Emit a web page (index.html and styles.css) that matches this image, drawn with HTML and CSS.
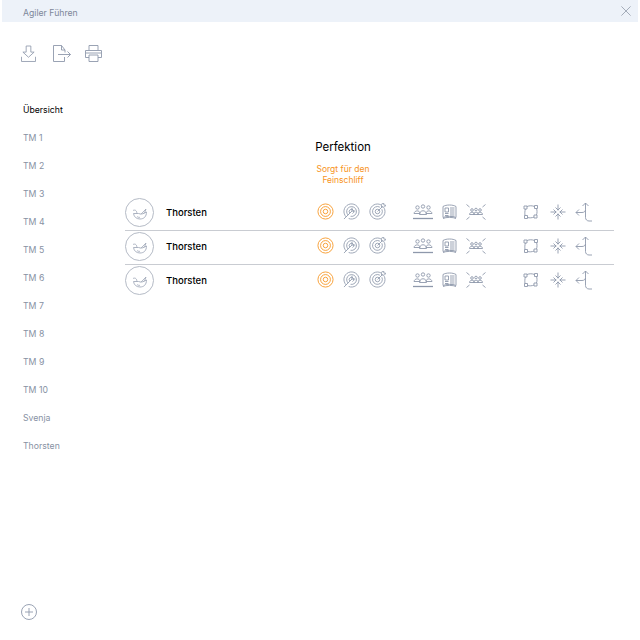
FILE: index.html
```html
<!DOCTYPE html>
<html lang="de">
<head>
    <meta charset="UTF-8">
    <meta name="viewport" content="width=device-width, initial-scale=1.0">
    <title>Agiler Führen</title>
    <link rel="stylesheet" href="styles.css">
</head>
<body>
    <svg class="defs" width="0" height="0">
        <symbol id="i-target" viewBox="0 0 18 18">
            <circle cx="9" cy="9" r="8"/><circle cx="9" cy="9" r="5.2"/><circle cx="9" cy="9" r="2.4"/>
        </symbol>
        <symbol id="i-aim" viewBox="0 0 18 18">
            <path d="M3.500 14.800A8 8 0 1 1 6 16.400"/><path d="M5.500 12.800A5.200 5.200 0 1 1 8 14.100"/><path d="M7.200 10.600A2.400 2.400 0 1 1 10 11.200"/>
            <path d="M1 17 9.500 8.500M9.500 8.500V5M9.500 8.500H13"/>
        </symbol>
        <symbol id="i-hit" viewBox="0 0 18 18">
            <path d="M12.500 1.900A8 8 0 1 0 16.100 5.500"/><path d="M11.500 4.400A5.200 5.200 0 1 0 13.600 6.600"/><circle cx="9" cy="9" r="2.400"/>
            <path d="M9 9 14.500 3.500M13 1.500l.3 2.700 2.700.3L18 2.500l-2.200-.3L15.500 0z"/>
        </symbol>
        <symbol id="i-group" viewBox="0 0 20 16">
            <circle cx="4.500" cy="3.500" r="1.700"/><circle cx="10" cy="2.500" r="1.700"/><circle cx="15.500" cy="3.500" r="1.700"/>
            <path d="M1 9.500c.5-3.500 6-3.500 6 0zM6.500 10.500c0-5 7-5 7 0zM13 9.500c0-3.500 5.500-3.500 6 0z"/>
            <path class="heavy" d="M0 14.500h20"/>
        </symbol>
        <symbol id="i-book" viewBox="0 0 15 16">
            <path d="M1 2.500c3-2 10-2 13 0v11c-3-1.500-10-1.500-13 0z"/>
            <path d="M3 4h3.500v4H3zM3 9.500h3.500M3 11.500h3.500M8 4h4.500M8 6h4.500M8 8h4.500M8 10h4.500M8 12h4.500M1 14.500c3-1.500 10-1.500 13 0"/>
        </symbol>
        <symbol id="i-burst" viewBox="0 0 20 16">
            <circle cx="6" cy="6" r="1.300"/><circle cx="10" cy="5.500" r="1.300"/><circle cx="14" cy="6" r="1.300"/>
            <path d="M3.500 10.500c0-3 5-3 5 0zM7.500 10.500c0-3 5-3 5 0zM11.500 10.500c0-3 5-3 5 0z"/>
            <path d="M.5 .5l3 2.500M19.500 .5l-3 2.500M.5 15.500l3-2.500M19.500 15.500l-3-2.500"/>
        </symbol>
        <symbol id="i-expand" viewBox="0 0 16 16">
            <path d="M1 2h3v3H1zM11.500 1.500h3v3h-3zM1.500 11.500h3v3h-3zM11 11h3v3h-3z"/>
            <path d="M4 2.500c2.500-1 5-1 7.500 0M2.500 5c-.8 2.200-.8 4.200-.5 6.500M13.500 4.500c.7 2 .7 4.200 0 6.500M4.500 13.500c2 .5 4.500.5 6.500-.5"/>
        </symbol>
        <symbol id="i-merge" viewBox="0 0 16 16">
            <path d="M8 .5v6M8 9.500v6M.5 8h6M9.500 8h6"/>
            <path d="M5.500 3.500 8 6l2.500-2.500M5.500 12.500 8 10l2.500 2.500M3.500 5.500 6 8l-2.500 2.500M12.500 5.500 10 8l2.500 2.500"/>
        </symbol>
        <symbol id="i-split" viewBox="0 0 17 20">
            <path d="M1 10.500h6c2 0 3.500-1 3.500-3V1M7.500 4l3-3 3 3M4 7.500l-3 3 3 3M10.500 7.500v8c0 2 1.500 3.500 3.500 3.500h3"/>
        </symbol>
        <symbol id="i-bird" viewBox="0 0 16 12">
            <path d="M1.500 5.500h5c2.500 1 5 .5 8-1.500C14.500 8.500 12 11 8 11 4.500 11 2 9 1.500 5.500z"/>
            <path d="M1 2.500C3 1.500 5 2.500 4.800 5.500M9 6.200 14 1l-1.500 4M5 8.500c1 .8 2 1 3 .8"/>
        </symbol>
    </svg>

    <header class="titlebar">
        <span class="titlebar-name">Agiler Führen</span>
        <svg class="close-icon" viewBox="0 0 12 12"><path d="M.5 .5l11 11M11.500 .5l-11 11"/></svg>
    </header>

    <div class="toolbar">
        <svg class="tool tool-save" viewBox="0 0 16 18"><path d="M5.500 1h5v6.500H14L8 13 2 7.500h3.500zM.5 12.500v5h15v-5"/></svg>
        <svg class="tool tool-export" viewBox="0 0 18 17"><path d="M8.500 .5H.5v16h11v-4.500M8.500 .5 12 5v2.500M8.500 .5V5H12M5 9.500h12.500M14.500 6.500l3 3-3 3"/></svg>
        <svg class="tool tool-print" viewBox="0 0 17 17"><path d="M4 5V.5h9V5M4 12.500H.5v-7h16v7H13M4 10h9v6.500H4zM1 8h15"/></svg>
    </div>

    <div class="layout">
        <nav class="sidebar">
            <a class="nav-item active">Übersicht</a>
            <a class="nav-item">TM 1</a>
            <a class="nav-item">TM 2</a>
            <a class="nav-item">TM 3</a>
            <a class="nav-item">TM 4</a>
            <a class="nav-item">TM 5</a>
            <a class="nav-item">TM 6</a>
            <a class="nav-item">TM 7</a>
            <a class="nav-item">TM 8</a>
            <a class="nav-item">TM 9</a>
            <a class="nav-item">TM 10</a>
            <a class="nav-item">Svenja</a>
            <a class="nav-item">Thorsten</a>
        </nav>

        <main class="content">
            <div class="heading">
                <h1>Perfektion</h1>
                <p>Sorgt für den<br>Feinschliff</p>
            </div>

            <div class="row">
                <span class="avatar"><svg><use href="#i-bird"/></svg></span>
                <span class="name">Thorsten</span>
                <div class="icons targets">
                    <svg class="on"><use href="#i-target"/></svg><svg><use href="#i-aim"/></svg><svg><use href="#i-hit"/></svg>
                </div>
                <div class="icons teams">
                    <svg class="wide"><use href="#i-group"/></svg><svg class="book"><use href="#i-book"/></svg><svg class="wide"><use href="#i-burst"/></svg>
                </div>
                <div class="icons moves">
                    <svg class="move"><use href="#i-expand"/></svg><svg class="move"><use href="#i-merge"/></svg><svg class="move tall"><use href="#i-split"/></svg>
                </div>
            </div>
            <div class="row">
                <span class="avatar"><svg><use href="#i-bird"/></svg></span>
                <span class="name">Thorsten</span>
                <div class="icons targets">
                    <svg class="on"><use href="#i-target"/></svg><svg><use href="#i-aim"/></svg><svg><use href="#i-hit"/></svg>
                </div>
                <div class="icons teams">
                    <svg class="wide"><use href="#i-group"/></svg><svg class="book"><use href="#i-book"/></svg><svg class="wide"><use href="#i-burst"/></svg>
                </div>
                <div class="icons moves">
                    <svg class="move"><use href="#i-expand"/></svg><svg class="move"><use href="#i-merge"/></svg><svg class="move tall"><use href="#i-split"/></svg>
                </div>
            </div>
            <div class="row">
                <span class="avatar"><svg><use href="#i-bird"/></svg></span>
                <span class="name">Thorsten</span>
                <div class="icons targets">
                    <svg class="on"><use href="#i-target"/></svg><svg><use href="#i-aim"/></svg><svg><use href="#i-hit"/></svg>
                </div>
                <div class="icons teams">
                    <svg class="wide"><use href="#i-group"/></svg><svg class="book"><use href="#i-book"/></svg><svg class="wide"><use href="#i-burst"/></svg>
                </div>
                <div class="icons moves">
                    <svg class="move"><use href="#i-expand"/></svg><svg class="move"><use href="#i-merge"/></svg><svg class="move tall"><use href="#i-split"/></svg>
                </div>
            </div>
        </main>
    </div>

    <svg class="add-icon" viewBox="0 0 18 18"><circle cx="9" cy="9" r="7.500"/><path d="M9 5v8M5 9h8"/></svg>
</body>
</html>
```

FILE: styles.css
```css
html, body {
	height: 100%;
}

body {
	margin: 0;
	position: relative;
	font-family: Inter, "Liberation Sans", sans-serif;
	background-color: #fff;
	color: #000;
	overflow: hidden;
}

svg {
	fill: none;
	stroke: #8e98ab;
	stroke-width: 0.9;
}

.defs {
	position: absolute;
}

.titlebar {
	display: flex;
	align-items: center;
	justify-content: space-between;
	height: 19px;
	margin: 0 2px;
	padding: 3px 7px 0 21px;
	background-color: #edf2f9;
	font-size: 8.700px;
	color: #7d8799;
}

.close-icon {
	width: 10px;
	height: 10px;
	margin-top: -3px;
	stroke: #8a93a3;
}

.toolbar {
	display: flex;
	align-items: center;
	height: 17px;
	padding: 23px 0 0 21px;
}

.tool-save {
	width: 15px;
	height: 17px;
}

.tool-export {
	width: 18px;
	height: 17px;
	margin-left: 17px;
}

.tool-print {
	width: 17px;
	height: 17px;
	margin-left: 14px;
}

.layout {
	display: flex;
	padding-top: 34px;
}

.sidebar {
	display: flex;
	flex-direction: column;
	width: 125px;
	flex-shrink: 0;
	padding-left: 23px;
	box-sizing: border-box;
}

.nav-item {
	height: 28px;
	line-height: 28px;
	font-size: 8.700px;
	color: #8791a3;
}

.nav-item.active {
	color: #000;
}

.content {
	width: 489px;
	margin-top: 43px;
}

.heading {
	margin: 0 0 11px 178px;
	width: 80px;
	text-align: center;
}

.heading h1 {
	margin: 0;
	font-size: 11.500px;
	font-weight: 400;
	line-height: 16px;
}

.heading p {
	margin: 9px 0 0;
	font-size: 8.500px;
	line-height: 11px;
	color: #f7941d;
}

.row {
	display: flex;
	align-items: center;
	height: 33px;
	border-bottom: 1px solid #c9ccd2;
}

.row:last-child {
	border-bottom: 0;
}

.avatar {
	display: flex;
	align-items: center;
	justify-content: center;
	width: 27px;
	height: 27px;
	margin-top: -2px;
	border: 1px solid #b5bbc6;
	border-radius: 50%;
	flex-shrink: 0;
}

.avatar svg {
	width: 16px;
	height: 12px;
	margin-top: 2px;
	stroke: #a4acbb;
}

.name {
	width: 151px;
	margin-left: 12px;
	margin-top: -3px;
	font-size: 9.500px;
	font-weight: 500;
}

.icons {
	display: flex;
	align-items: center;
	margin-top: -4px;
}

.icons svg {
	width: 17px;
	height: 17px;
}

.targets {
	width: 96px;
	gap: 9px;
}

.icons .on {
	stroke: #f7941d;
}

.teams {
	width: 110px;
	gap: 9px;
}

.icons .wide {
	width: 20px;
	height: 16px;
}

.icons .book {
	width: 15px;
	height: 16px;
}

.moves {
	gap: 11px;
}

.icons .move {
	width: 16px;
	height: 16px;
}

.icons .tall {
	width: 17px;
	height: 20px;
	margin-left: -2px;
}

.heavy {
	stroke-width: 1.300;
}

.add-icon {
	position: absolute;
	left: 20px;
	top: 603px;
	width: 18px;
	height: 18px;
}
```
